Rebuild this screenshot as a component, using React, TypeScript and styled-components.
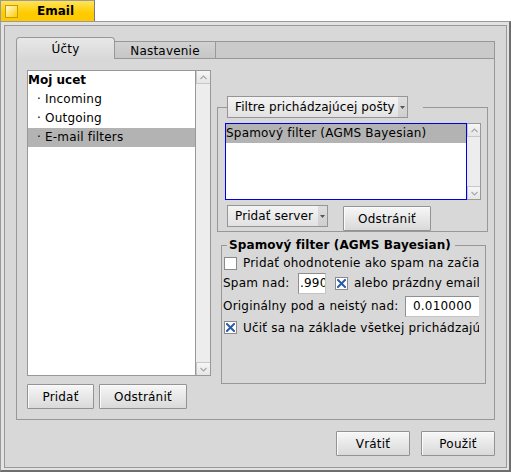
import React from 'react';
import styled, { createGlobalStyle } from 'styled-components';

const Global = createGlobalStyle`
  html, body { margin: 0; padding: 0; background: #ffffff; }
  body { font-family: "DejaVu Sans", "Noto Sans", sans-serif; font-size: 12px; letter-spacing: 0.2px; color: #000; }
  * { box-sizing: border-box; }
`;

const Page = styled.div`
  width: 511px;
  height: 472px;
  display: flex;
  flex-direction: column;
`;

const TitleTab = styled.div`
  width: 95px;
  height: 21px;
  display: flex;
  align-items: center;
  padding-left: 4px;
  background: linear-gradient(#ffe45a, #ffcb00 60%, #ffc800);
  border: 1px solid #9a9a9a;
  border-right-color: #7a7a7a;
  border-bottom: none;
`;

const TitleIcon = styled.div`
  width: 13px;
  height: 13px;
  border: 1px solid #c49e00;
  background: linear-gradient(135deg, #fffbe0, #ffe066 55%, #ffcc00);
`;

const TitleText = styled.span`
  font-weight: bold;
  letter-spacing: 0;
  margin-left: 19px;
`;

const Frame = styled.div`
  flex: 1;
  border: 1px solid #9a9a9a;
  border-right: 2px solid #6e6e6e;
  border-bottom: 2px solid #6e6e6e;
  padding: 3px 2px 2px 3px;
  background: #e2e2e2;
  display: flex;
`;

const Content = styled.div`
  flex: 1;
  border: 1px solid #989898;
  background: #d8d8d8;
  padding: 11px 11px 10px 11px;
  display: flex;
  flex-direction: column;
  gap: 11px;
`;

const TabView = styled.div`
  height: 383px;
  display: flex;
  flex-direction: column;
`;

const TabBar = styled.div`
  height: 22px;
  display: flex;
  align-items: flex-end;
`;

const Tab = styled.div<{ $active?: boolean; $w: number }>`
  width: ${p => p.$w}px;
  height: ${p => (p.$active ? 22 : 18)}px;
  display: flex;
  align-items: center;
  justify-content: center;
  border: 1px solid #989898;
  ${p => (p.$active
    ? `border-bottom: none; border-radius: 4px 4px 0 0; background: linear-gradient(#e8e8e8, #d8d8d8); padding-top: 1px;`
    : `border-left: none; background: linear-gradient(#d2d2d2, #c6c6c6); padding-top: 1px;`)}
`;

const TabFiller = styled.div`
  flex: 1;
  height: 18px;
  border: 1px solid #989898;
  border-left: none;
  background: #cacaca;
`;

const Panel = styled.div`
  flex: 1;
  border: 1px solid #989898;
  border-top: none;
  padding: 11px 6px 10px 10px;
  display: flex;
  gap: 6px;
`;

const LeftCol = styled.div`
  width: 184px;
  display: flex;
  flex-direction: column;
  gap: 8px;
`;

const RightCol = styled.div`
  width: 271px;
  display: flex;
  flex-direction: column;
  padding-top: 26px;
  gap: 6px;
`;

const ListFrame = styled.div<{ $h: number }>`
  height: ${p => p.$h}px;
  display: flex;
`;

const ListBody = styled.div<{ $focus?: boolean }>`
  flex: 1;
  background: #fff;
  border: 1px solid ${p => (p.$focus ? '#0000e8' : '#989898')};
  overflow: hidden;
`;

const Row = styled.div<{ $sel?: boolean; $bold?: boolean; $indent?: number }>`
  height: 19px;
  line-height: 19px;
  white-space: nowrap;
  padding-left: ${p => p.$indent ?? 0}px;
  font-weight: ${p => (p.$bold ? 'bold' : 'normal')};
  letter-spacing: ${p => (p.$bold ? '0' : '0.2px')};
  background: ${p => (p.$sel ? '#b3b3b3' : 'transparent')};
`;

const ScrollBar = styled.div<{ $w: number }>`
  width: ${p => p.$w}px;
  border: 1px solid #989898;
  border-left: none;
  background: #ededed;
  display: flex;
  flex-direction: column;
  justify-content: space-between;
`;

const ArrowBtn = styled.div<{ $down?: boolean }>`
  height: 13px;
  display: flex;
  align-items: center;
  justify-content: center;
  background: linear-gradient(#f6f6f6, #e6e6e6);
  border-${p => (p.$down ? 'top' : 'bottom')}: 1px solid #c8c8c8;
  border-left: 1px solid #c8c8c8;
`;

const Chevron = ({ down }: { down?: boolean }) => (
  <svg width="7" height="5" viewBox="0 0 7 5">
    <polyline
      points={down ? '0.5,1 3.5,4 6.5,1' : '0.5,4 3.5,1 6.5,4'}
      fill="none"
      stroke="#a8a8a8"
      strokeWidth="1.2"
    />
  </svg>
);

const VScroll = ({ w }: { w: number }) => (
  <ScrollBar $w={w}>
    <ArrowBtn><Chevron /></ArrowBtn>
    <ArrowBtn $down><Chevron down /></ArrowBtn>
  </ScrollBar>
);

const ButtonRow = styled.div<{ $end?: boolean; $gap: number; $mt?: number }>`
  display: flex;
  align-items: flex-start;
  justify-content: ${p => (p.$end ? 'flex-end' : 'flex-start')};
  gap: ${p => p.$gap}px;
  margin-top: ${p => p.$mt ?? 0}px;
`;

const Button = styled.div<{ $w: number; $mt?: number; $ml?: number }>`
  width: ${p => p.$w}px;
  height: 25px;
  margin-top: ${p => p.$mt ?? 0}px;
  margin-left: ${p => p.$ml ?? 0}px;
  display: flex;
  align-items: center;
  justify-content: center;
  border: 1px solid #939393;
  border-radius: 1px;
  background: linear-gradient(#f7f7f7, #e8e8e8 50%, #d9d9d9);
  box-shadow: inset 1px 1px 0 #fbfbfb;
  white-space: nowrap;
`;

const MenuField = styled.div<{ $w: number; $ml?: number }>`
  width: ${p => p.$w}px;
  height: 22px;
  margin-left: ${p => p.$ml ?? 0}px;
  display: flex;
  border: 1px solid #959595;
  background: linear-gradient(#f4f4f4, #e2e2e2);
  white-space: nowrap;
`;

const MenuLabel = styled.div`
  flex: 1;
  display: flex;
  align-items: center;
  padding-left: 7px;
  letter-spacing: 0.1px;
`;

const MenuArrow = styled.div`
  width: 9px;
  flex: none;
  display: flex;
  align-items: center;
  justify-content: center;
  background: linear-gradient(#dedede, #cfcfcf);
`;

const Caret = () => (
  <svg width="5" height="3" viewBox="0 0 5 3">
    <polygon points="0,0 5,0 2.5,3" fill="#555" />
  </svg>
);

const Box = styled.fieldset<{ $ml?: number; $mr?: number; $h?: number; $pl: number }>`
  margin: 0 ${p => p.$mr ?? 0}px 0 ${p => p.$ml ?? 0}px;
  padding: 0 6px 0 ${p => p.$pl}px;
  border: 1px solid #989898;
  min-inline-size: 0;
  ${p => (p.$h ? `height: ${p.$h}px;` : '')}
`;

const Legend = styled.legend<{ $ml: number; $pl: number; $pr: number; $bold?: boolean }>`
  margin-left: ${p => p.$ml}px;
  padding: 0 ${p => p.$pr}px 0 ${p => p.$pl}px;
  font-weight: ${p => (p.$bold ? 'bold' : 'normal')};
  letter-spacing: ${p => (p.$bold ? '0.1px' : '0.2px')};
  line-height: 15px;
`;

const BoxList = styled.div`
  margin-top: 5px;
`;

const Clip = styled.div`
  overflow: hidden;
  white-space: nowrap;
  padding-top: 1px;
`;

const FormRow = styled.div<{ $h: number; $mt?: number }>`
  height: ${p => p.$h}px;
  margin-top: ${p => p.$mt ?? 0}px;
  display: flex;
  align-items: center;
`;

const FieldLabel = styled.span<{ $w: number }>`
  width: ${p => p.$w}px;
  flex: none;
`;

const Check = styled.div<{ $ml?: number }>`
  width: 13px;
  height: 13px;
  flex: none;
  margin-left: ${p => p.$ml ?? 0}px;
  margin-right: 6px;
  border: 1px solid #8a8a8a;
  background: #fff;
  display: flex;
  align-items: center;
  justify-content: center;
`;

const CheckBox = ({ checked, ml }: { checked?: boolean; ml?: number }) => (
  <Check $ml={ml}>
    {checked && (
      <svg width="9" height="9" viewBox="0 0 9 9">
        <path d="M1 1 L8 8 M8 1 L1 8" stroke="#2a5ca8" strokeWidth="2" strokeLinecap="square" />
      </svg>
    )}
  </Check>
);

const TextField = styled.div<{ $w: number; $pl: number }>`
  width: ${p => p.$w}px;
  height: 21px;
  flex: none;
  padding-left: ${p => p.$pl}px;
  display: flex;
  align-items: center;
  overflow: hidden;
  background: #fff;
  border: 1px solid #8f8f8f;
  border-right-color: #c4c4c4;
  border-bottom-color: #c4c4c4;
`;

export default function App() {
  return (
    <Page>
      <Global />
      <TitleTab>
        <TitleIcon />
        <TitleText>Email</TitleText>
      </TitleTab>
      <Frame>
        <Content>
          <TabView>
            <TabBar>
              <Tab $active $w={99}>Účty</Tab>
              <Tab $w={101}>Nastavenie</Tab>
              <TabFiller />
            </TabBar>
            <Panel>
              <LeftCol>
                <ListFrame $h={306}>
                  <ListBody>
                    <Row $bold>Moj ucet</Row>
                    <Row $indent={9}>· Incoming</Row>
                    <Row $indent={9}>· Outgoing</Row>
                    <Row $indent={9} $sel>· E-mail filters</Row>
                  </ListBody>
                  <VScroll w={15} />
                </ListFrame>
                <ButtonRow $gap={5}>
                  <Button $w={67}>Pridať</Button>
                  <Button $w={88}>Odstrániť</Button>
                </ButtonRow>
              </LeftCol>
              <RightCol>
                <Box $pl={7}>
                  <Legend $ml={2} $pl={0} $pr={15}>
                    <MenuField $w={181}>
                      <MenuLabel>Filtre prichádzajúcej pošty</MenuLabel>
                      <MenuArrow><Caret /></MenuArrow>
                    </MenuField>
                  </Legend>
                  <BoxList>
                    <ListFrame $h={77}>
                      <ListBody $focus>
                        <Row $sel $indent={0}>Spamový filter (AGMS Bayesian)</Row>
                      </ListBody>
                      <VScroll w={14} />
                    </ListFrame>
                  </BoxList>
                  <ButtonRow $gap={15} $mt={5}>
                    <MenuField $w={101} $ml={2}>
                      <MenuLabel>Pridať server</MenuLabel>
                      <MenuArrow><Caret /></MenuArrow>
                    </MenuField>
                    <Button $w={88} $mt={1}>Odstrániť</Button>
                  </ButtonRow>
                </Box>
                <Box $pl={1} $ml={4} $mr={2} $h={146}>
                  <Legend $bold $ml={4} $pl={2} $pr={4}>Spamový filter (AGMS Bayesian)</Legend>
                  <Clip>
                    <FormRow $h={18}>
                      <CheckBox ml={1} />
                      Pridať ohodnotenie ako spam na začiatok predmetu
                    </FormRow>
                    <FormRow $h={22}>
                      <FieldLabel $w={75}>Spam nad:</FieldLabel>
                      <TextField $w={28} $pl={1}>.990</TextField>
                      <CheckBox checked ml={9} />
                      alebo prázdny email
                    </FormRow>
                    <FormRow $h={22} $mt={1}>
                      <FieldLabel $w={182}>Originálny pod a neistý nad:</FieldLabel>
                      <TextField $w={77} $pl={7}>0.010000</TextField>
                    </FormRow>
                    <FormRow $h={19} $mt={1}>
                      <CheckBox checked ml={1} />
                      Učiť sa na základe všetkej prichádzajúcej pošty
                    </FormRow>
                  </Clip>
                </Box>
              </RightCol>
            </Panel>
          </TabView>
          <ButtonRow $end $gap={11}>
            <Button $w={74}>Vrátiť</Button>
            <Button $w={74}>Použiť</Button>
          </ButtonRow>
        </Content>
      </Frame>
    </Page>
  );
}
